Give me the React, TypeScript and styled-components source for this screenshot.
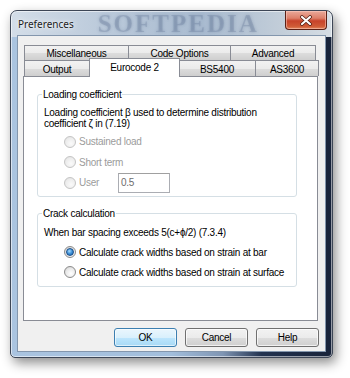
import styled, { createGlobalStyle } from "styled-components";

const GlobalStyle = createGlobalStyle`
  html, body {
    margin: 0;
    padding: 0;
    background: #ffffff;
  }
  * {
    box-sizing: border-box;
  }
`;

const uiFont = `"Liberation Sans", Arial, sans-serif`;

const Page = styled.div`
  width: 350px;
  height: 378px;
  padding: 10px 0 0 10px;
  background: #ffffff;
  font-family: ${uiFont};
  font-size: 10px;
  letter-spacing: -0.25px;
  color: #000;
`;

const Window = styled.div`
  width: 323px;
  height: 348px;
  display: flex;
  flex-direction: column;
  padding: 0 6px 5px 6px;
  border: 1px solid #3d4656;
  border-radius: 7px 7px 5px 5px;
  box-shadow: 3px 5px 12px rgba(0, 0, 0, 0.45), inset 0 0 0 1px rgba(255, 255, 255, 0.55);
  background:
    linear-gradient(to right, #d3dde8 0%, #bac9da 30%, #a9bbd0 60%, #c3ced9 85%, #d6dde4 100%) top / 100% 26px no-repeat,
    linear-gradient(to right, #aac4e0 0%, #a2bedc 50%, #7f95b3 66%, #22324f 78%, #18233a 100%);
`;

const TitleBar = styled.div`
  height: 24px;
  display: flex;
  align-items: center;
  padding-left: 1px;
  padding-top: 1px;
`;

const Title = styled.span`
  font-family: "Noto Sans", "Open Sans", sans-serif;
  font-size: 10px;
  letter-spacing: 0;
  color: #1b1b1b;
  text-shadow: 0 0 6px rgba(255, 255, 255, 0.95), 0 0 2px rgba(255, 255, 255, 0.9);
`;

const Watermark = styled.span`
  flex: 1;
  margin-left: 24px;
  font-family: "Liberation Serif", serif;
  font-weight: bold;
  font-size: 25px;
  letter-spacing: 2px;
  line-height: 24px;
  color: rgba(80, 102, 135, 0.22);
  text-shadow: 0 0 3px rgba(80, 102, 135, 0.3);
  filter: blur(0.6px);
  white-space: nowrap;
`;

const CloseButton = styled.div`
  align-self: flex-start;
  margin-top: -1px;
  margin-right: -1px;
  width: 42px;
  height: 19px;
  flex: none;
  display: flex;
  align-items: center;
  justify-content: center;
  border: 1px solid #5b2015;
  border-top: none;
  border-radius: 0 0 4px 4px;
  background: linear-gradient(to bottom, #e9a99a 0%, #dd7f69 40%, #c7432a 55%, #cf5a36 85%, #e2875c 100%);
  box-shadow: inset 0 0 0 1px rgba(255, 210, 200, 0.5);
`;

const Client = styled.div`
  flex: 1;
  display: flex;
  flex-direction: column;
  background: #f0f0f0;
  border: 1px solid #8396ad;
  padding: 9px 7px 0 5px;
`;

const TabRow = styled.div<{ $height: number }>`
  display: flex;
  height: ${(p) => p.$height}px;
  margin-left: 1px;
`;

const Tab = styled.div<{ $width: number; $active?: boolean }>`
  width: ${(p) => p.$width}px;
  flex: none;
  display: flex;
  align-items: center;
  justify-content: center;
  border: 1px solid #898c95;
  border-bottom: none;
  margin-left: -1px;
  padding-top: 1px;
  background: linear-gradient(to bottom, #f2f2f2 0%, #ebebeb 50%, #dddddd 50%, #cfcfcf 100%);
  white-space: nowrap;

  &:first-child {
    margin-left: 0;
  }

  ${(p) =>
    p.$active &&
    `
    position: relative;
    z-index: 1;
    background: #ffffff;
    margin-top: -2px;
    margin-right: -1px;
    height: calc(100% + 3px);
    align-items: flex-start;
    padding-top: 3px;
  `}
`;

const Panel = styled.div`
  width: 295px;
  height: 245px;
  background: #ffffff;
  border: 1px solid #898c95;
  padding: 11px 20px 0 13px;
  display: flex;
  flex-direction: column;
  gap: 10px;
`;

const Group = styled.fieldset<{ $pt: number; $pb: number }>`
  margin: 0;
  border: 1px solid #d5dfe5;
  border-radius: 3px;
  padding: ${(p) => p.$pt}px 4px ${(p) => p.$pb}px 6px;
  min-width: 0;
`;

const Legend = styled.legend`
  padding: 0 1px;
  margin-left: -2px;
  line-height: 13px;
`;

const Text = styled.div`
  line-height: 11px;
`;

const Options = styled.div<{ $mt: number }>`
  margin-top: ${(p) => p.$mt}px;
  padding-left: 20px;
  display: flex;
  flex-direction: column;
`;

const OptionRow = styled.div<{ $h: number; $disabled?: boolean }>`
  height: ${(p) => p.$h}px;
  display: flex;
  align-items: center;
  color: ${(p) => (p.$disabled ? "#9c9c9c" : "#000")};
`;

const Radio = styled.span<{ $checked?: boolean; $disabled?: boolean }>`
  width: 12px;
  height: 12px;
  flex: none;
  border-radius: 50%;
  margin-right: 3px;
  display: flex;
  align-items: center;
  justify-content: center;
  border: 1px solid ${(p) => (p.$disabled ? "#c4c4c4" : "#8b8b8b")};
  background: ${(p) =>
    p.$disabled
      ? "radial-gradient(circle at 60% 65%, #fafafa 0%, #ececec 60%, #dcdcdc 100%)"
      : "radial-gradient(circle at 60% 65%, #ffffff 0%, #e9e9e9 55%, #c9c9c9 100%)"};

  &::after {
    content: "";
    display: ${(p) => (p.$checked ? "block" : "none")};
    width: 6px;
    height: 6px;
    border-radius: 50%;
    border: 1px solid #1b4f8a;
    background: radial-gradient(circle at 40% 35%, #a9dcff 0%, #3c8fd6 50%, #1b5fa8 100%);
  }
`;

const OptionLabel = styled.span<{ $width?: number }>`
  white-space: nowrap;
  ${(p) => (p.$width ? `width: ${p.$width}px;` : "")}
`;

const ValueBox = styled.div`
  width: 52px;
  height: 20px;
  border: 1px solid #abadb3;
  border-top-color: #a0a0a0;
  background: #ffffff;
  color: #6d6d6d;
  padding: 3px 0 0 2px;
`;

const ButtonRow = styled.div`
  display: flex;
  justify-content: flex-end;
  gap: 8px;
  margin-top: 7px;
  margin-right: -1px;
`;

const Button = styled.div<{ $default?: boolean }>`
  width: 63px;
  height: 19px;
  display: flex;
  align-items: center;
  justify-content: center;
  border-radius: 3px;
  border: 1px solid ${(p) => (p.$default ? "#3c7fb1" : "#707070")};
  background: ${(p) =>
    p.$default
      ? "linear-gradient(to bottom, #eaf6fd 0%, #d9f0fc 50%, #bee6fd 50%, #a7d9f5 100%)"
      : "linear-gradient(to bottom, #f2f2f2 0%, #ebebeb 50%, #dddddd 50%, #cfcfcf 100%)"};
  box-shadow: inset 0 0 0 1px ${(p) => (p.$default ? "rgba(255,255,255,0.6)" : "rgba(255,255,255,0.7)")};
`;

const topTabs = [
  { label: "Miscellaneous", width: 105 },
  { label: "Code Options", width: 103 },
  { label: "Advanced", width: 86 },
];

const bottomTabs = [
  { label: "Output", width: 66 },
  { label: "Eurocode 2", width: 91, active: true },
  { label: "BS5400", width: 78 },
  { label: "AS3600", width: 64 },
];

const CloseGlyph = () => (
  <svg width="14" height="11" viewBox="0 0 14 11">
    <path d="M3 2 L11 9 M11 2 L3 9" stroke="#4a1a10" strokeWidth="3.6" strokeLinecap="round" />
    <path d="M3 2 L11 9 M11 2 L3 9" stroke="#ffffff" strokeWidth="2.2" strokeLinecap="round" />
  </svg>
);

export default function App() {
  return (
    <>
      <GlobalStyle />
      <Page>
        <Window>
          <TitleBar>
            <Title>Preferences</Title>
            <Watermark>SOFTPEDIA</Watermark>
            <CloseButton>
              <CloseGlyph />
            </CloseButton>
          </TitleBar>
          <Client>
            <TabRow $height={15}>
              {topTabs.map((t) => (
                <Tab key={t.label} $width={t.width}>
                  {t.label}
                </Tab>
              ))}
            </TabRow>
            <TabRow $height={16}>
              {bottomTabs.map((t) => (
                <Tab key={t.label} $width={t.width} $active={t.active}>
                  {t.label}
                </Tab>
              ))}
            </TabRow>
            <Panel>
              <Group $pt={6} $pb={3}>
                <Legend>Loading coefficient</Legend>
                <Text>Loading coefficient β used to determine distribution</Text>
                <Text>coefficient ζ in (7.19)</Text>
                <Options $mt={2}>
                  <OptionRow $h={21} $disabled>
                    <Radio $disabled />
                    <OptionLabel>Sustained load</OptionLabel>
                  </OptionRow>
                  <OptionRow $h={20.5} $disabled>
                    <Radio $disabled />
                    <OptionLabel>Short term</OptionLabel>
                  </OptionRow>
                  <OptionRow $h={20.5} $disabled>
                    <Radio $disabled />
                    <OptionLabel $width={39}>User</OptionLabel>
                    <ValueBox>0.5</ValueBox>
                  </OptionRow>
                </Options>
              </Group>
              <Group $pt={7} $pb={4}>
                <Legend>Crack calculation</Legend>
                <Text>When bar spacing exceeds 5(c+ϕ/2) (7.3.4)</Text>
                <Options $mt={4}>
                  <OptionRow $h={20}>
                    <Radio $checked />
                    <OptionLabel>Calculate crack widths based on strain at bar</OptionLabel>
                  </OptionRow>
                  <OptionRow $h={20}>
                    <Radio />
                    <OptionLabel>Calculate crack widths based on strain at surface</OptionLabel>
                  </OptionRow>
                </Options>
              </Group>
            </Panel>
            <ButtonRow>
              <Button $default>OK</Button>
              <Button>Cancel</Button>
              <Button>Help</Button>
            </ButtonRow>
          </Client>
        </Window>
      </Page>
    </>
  );
}
